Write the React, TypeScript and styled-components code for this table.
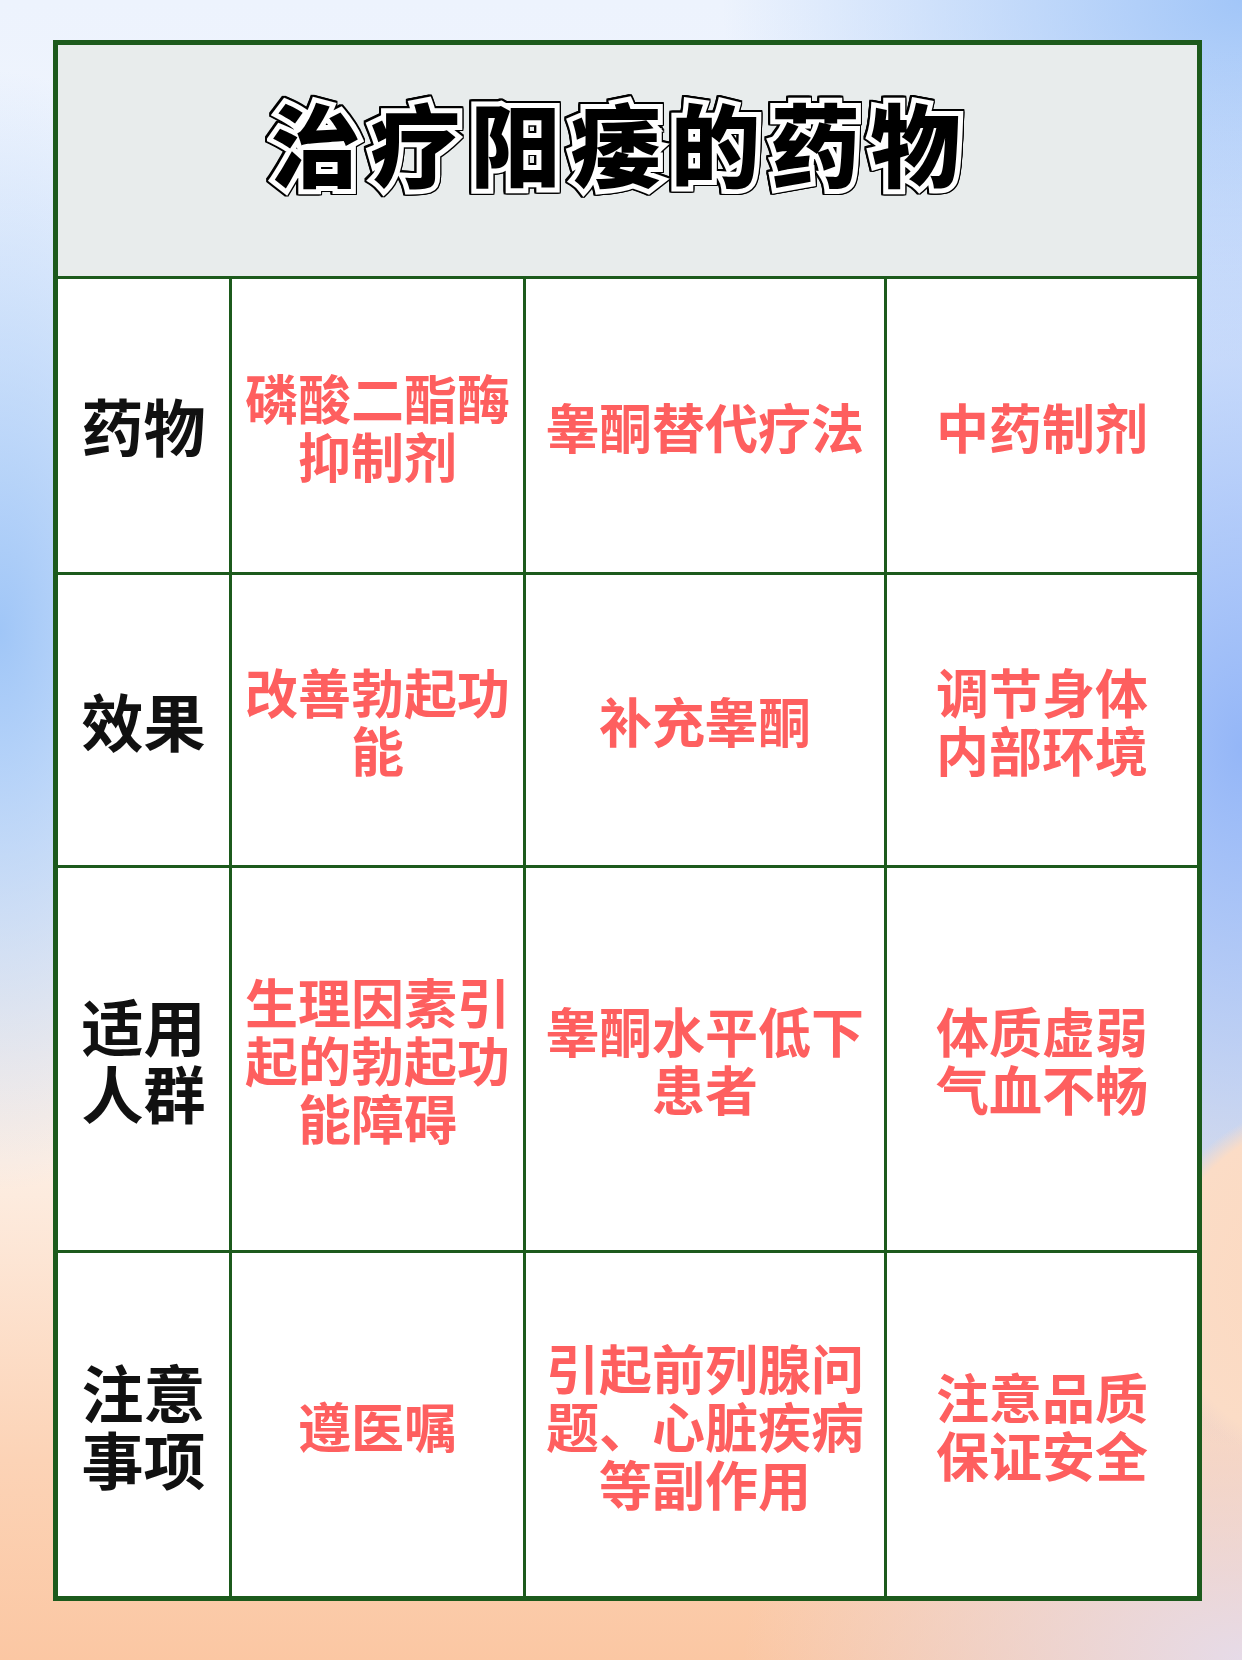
import React from 'react';
import styled, { createGlobalStyle } from 'styled-components';

const GlobalStyle = createGlobalStyle`
  html, body {
    margin: 0;
    padding: 0;
  }
  body {
    font-family: "Noto Sans CJK SC", "Noto Sans", sans-serif;
  }
`;

const CJK = `"Noto Sans CJK SC", "Noto Sans", sans-serif`;
const GREEN = '#1c5a1c';

type Row = {
  label: string[];
  cells: string[][];
};

const rows: Row[] = [
  {
    label: ['药物'],
    cells: [['磷酸二酯酶', '抑制剂'], ['睾酮替代疗法'], ['中药制剂']],
  },
  {
    label: ['效果'],
    cells: [['改善勃起功', '能'], ['补充睾酮'], ['调节身体', '内部环境']],
  },
  {
    label: ['适用', '人群'],
    cells: [['生理因素引', '起的勃起功', '能障碍'], ['睾酮水平低下', '患者'], ['体质虚弱', '气血不畅']],
  },
  {
    label: ['注意', '事项'],
    cells: [['遵医嘱'], ['引起前列腺问', '题、心脏疾病', '等副作用'], ['注意品质', '保证安全']],
  },
];

const App = () => {
  return (
    <Page>
      <GlobalStyle />
      <Table>
        <Header>
          <Title>治疗阳痿的药物</Title>
        </Header>
        {rows.map((row, i) => (
          <React.Fragment key={i}>
            <LabelCell>
              {row.label.map((line, j) => <Line key={j}>{line}</Line>)}
            </LabelCell>
            {row.cells.map((cell, k) => (
              <ValueCell key={k}>
                {cell.map((line, j) => <Line key={j}>{line}</Line>)}
              </ValueCell>
            ))}
          </React.Fragment>
        ))}
      </Table>
    </Page>
  );
};

const Page = styled.div`
  width: 1242px;
  height: 1660px;
  box-sizing: border-box;
  padding: 40px 0 0 53px;
  overflow: hidden;
  background:
    radial-gradient(circle at 1330px 1285px, #fcd8bf 0, #fbdcc6 165px, rgba(252, 220, 198, 0) 185px),
    radial-gradient(ellipse 420px 700px at 100% 45%, #94b6f7 0%, rgba(160, 192, 248, 0.6) 50%, rgba(160, 192, 248, 0) 100%),
    radial-gradient(ellipse 520px 360px at 100% 0%, #a2c6f8 0%, rgba(170, 204, 249, 0) 100%),
    radial-gradient(ellipse 280px 560px at 0% 38%, #a0c6f7 0%, rgba(168, 204, 248, 0) 100%),
    radial-gradient(ellipse 500px 300px at 100% 100%, #e6dbe8 0%, rgba(230, 219, 232, 0) 100%),
    linear-gradient(180deg, #edf3fd 0%, #f5f8fe 45%, #fdeee3 70%, #fcd3b6 88%, #fbc7a3 100%);
`;

const Table = styled.div`
  display: grid;
  grid-template-columns: 171px 291px 358px 310px;
  grid-template-rows: 231px 293px 290px 382px 343px;
  gap: 3px;
  width: 1149px;
  box-sizing: border-box;
  border: 5px solid ${GREEN};
  background: ${GREEN};
`;

const Header = styled.div`
  grid-column: 1 / -1;
  display: flex;
  align-items: center;
  justify-content: center;
  padding: 0 14px 40px 0;
  background: #e8ecec;
`;

const Title = styled.h1`
  margin: 0;
  font-family: ${CJK};
  font-size: 90px;
  font-weight: 900;
  line-height: 1;
  letter-spacing: 10px;
  color: #000;
  -webkit-text-stroke: 10px #fff;
  paint-order: stroke fill;
  filter: drop-shadow(1.5px 0 0 #000) drop-shadow(-1.5px 0 0 #000) drop-shadow(0 1.5px 0 #000) drop-shadow(0 -1.5px 0 #000);
`;

const Cell = styled.div`
  display: flex;
  flex-direction: column;
  align-items: center;
  justify-content: center;
  background: #fff;
  text-align: center;
  font-family: ${CJK};
`;

const LabelCell = styled(Cell)`
  font-size: 62px;
  line-height: 67px;
  font-weight: 700;
  color: #111;
`;

const ValueCell = styled(Cell)`
  font-size: 53px;
  line-height: 58px;
  font-weight: 600;
  color: #fe5f5f;
`;

const Line = styled.span`
  display: block;
  white-space: nowrap;
`;

export default App;
